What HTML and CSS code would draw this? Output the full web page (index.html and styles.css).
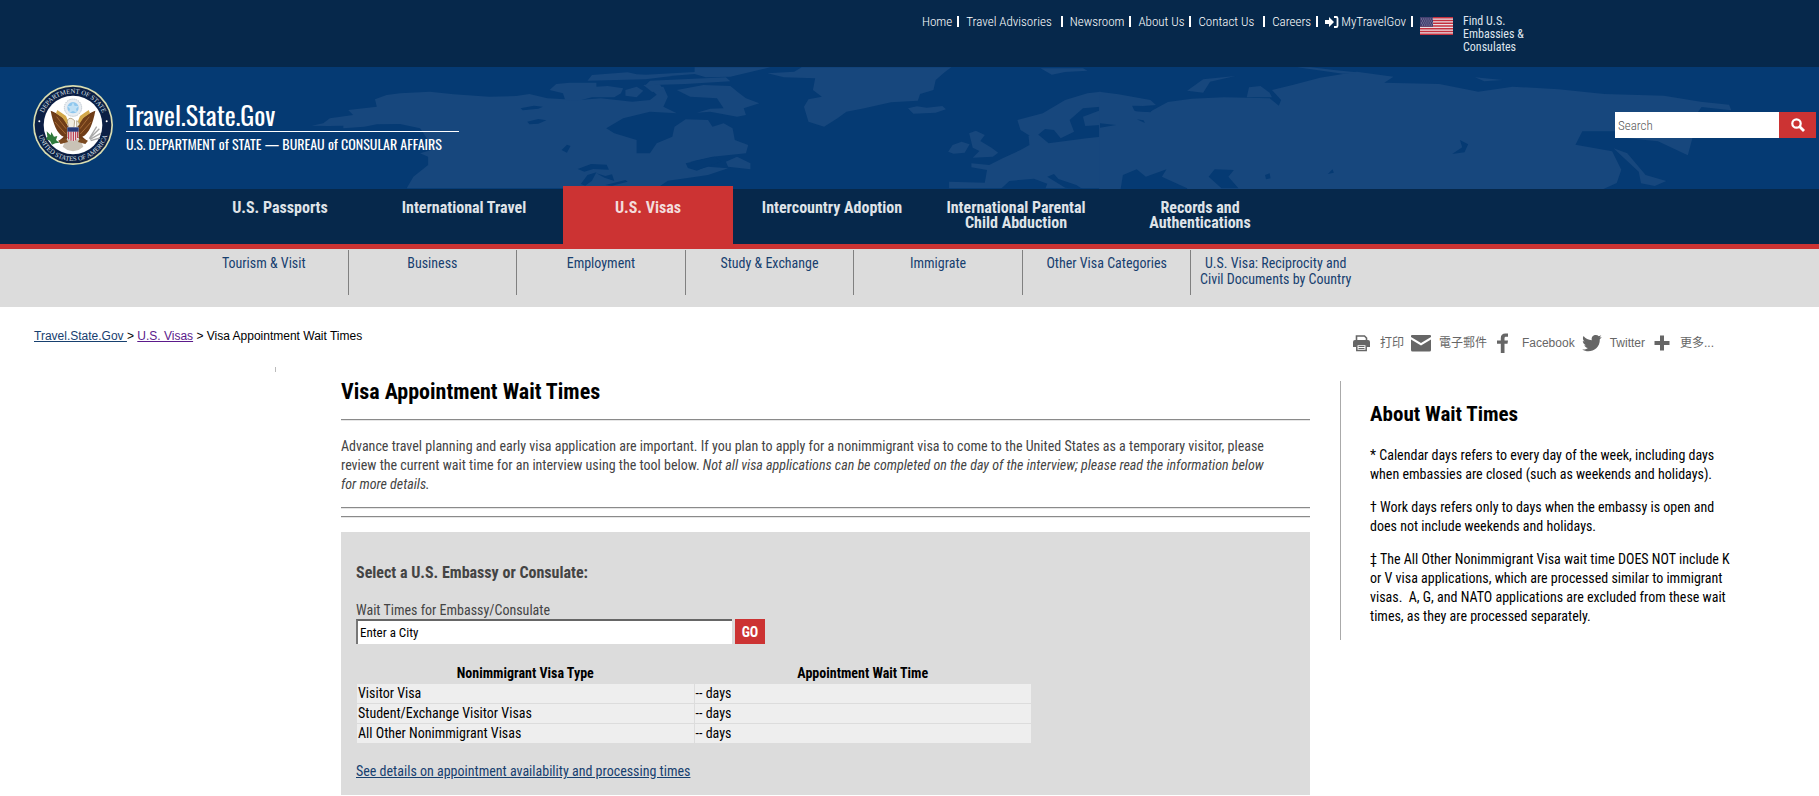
FILE: index.html
```html
<!DOCTYPE html>
<html lang="en">
<head>
<meta charset="utf-8">
<title>Visa Appointment Wait Times</title>
<link rel="stylesheet" href="styles.css">
</head>
<body>
<div class="topbar">
  <nav class="toplinks" aria-label="Utility">
    <a href="#">Home</a><i class="bar"></i>
    <a href="#">Travel Advisories</a><i class="bar wide"></i>
    <a href="#">Newsroom</a><i class="bar"></i>
    <a href="#">About Us</a><i class="bar"></i>
    <a href="#">Contact Us</a><i class="bar wide"></i>
    <a href="#">Careers</a><i class="bar"></i>
    <a href="#" class="login"><svg width="14" height="12" viewBox="0 0 14 12"><path d="M0 4h4V1l5 5-5 5V8H0z" fill="#fff"/><path d="M9 1h2.2A1.3 1.3 0 0 1 12.500 2.300v7.400A1.300 1.300 0 0 1 11.200 11H9" fill="none" stroke="#fff" stroke-width="1.800"/></svg>MyTravelGov</a><i class="bar"></i>
  </nav>
  <svg class="flag" width="33" height="18" viewBox="0 0 33 18"><path fill="#e9dfe4" d="M0 0h33v18H0z"/><path d="M0 .7h33M0 3.500h33M0 6.200h33M0 9h33M0 11.800h33M0 14.500h33M0 17.300h33" stroke="#c4303e" stroke-width="1.500"/><path fill="#43406f" d="M0 0h13v9.700H0z"/><path d="M1 2h12M2 4h11M1 6h12M2 8h11" stroke="#a9a6c4" stroke-width=".8" stroke-dasharray="1 1.200"/></svg>
  <a href="#" class="find">Find U.S. Embassies &amp; Consulates</a>
</div>

<header class="banner">
  <svg class="map" viewBox="0 0 1819 122" preserveAspectRatio="xMinYMin slice" aria-hidden="true">
    <g transform="translate(400 -7) scale(.4464 .3333)" fill="#17477d">
      <path d="M-198 197L-172 190-157 175-105 165-116 150-52 140-56 118-30 105 0 100 67 95 120 103 200 110 260 108 290 102 330 115 400 120 450 115 520 125 560 120 575 104 560 85 590 80 600 110 590 140 620 160 560 155 500 175 462 205 480 220 530 240 530 280 560 280 575 250 610 230 615 200 640 178 690 180 700 200 725 190 745 205 750 240 780 255 775 280 700 290 650 305 680 305 665 330 690 320 735 325 690 345 640 355 600 362 575 385 15 385 30 350 63 315 63 290 45 280 70 270 60 235 45 205 0 192-52 193-80 200-127 205-127 197-160 198z"/>
      <path d="M335 90L350 72 380 68 440 68 440 80 465 78 500 85 495 100 480 112 430 112 400 122 370 120 365 100zM505 90l25-10 15 12-15 20-25-5zM545 75l35-5 10 18-25 8zM620 90l60-15 60 3 20 22 15 15 30 15-35 15 5 20-20 5-60-15-30 3 30-12 30-1-15-30-60-5z"/>
      <path d="M660 22h170l-90 28-55 2-25-10-90 10-20-8 110-8zM430 45l80-8 20 6 80 5-60 10-130 4zM560 62l170-10 10 12-100 8-90 4zM730 305l25-15 30 20v18l-50-8z"/>
      <path d="M823 40l60-5 17-13h335l-15 15-20 23-5 30-30 12-5 20-60 5-60 18-40 10-20 20-30 25-35-15-10-45 10-22 30-8-20-20 5-35-70-3zM1138 145l20-6 22 4 35-5 8 10-23 10-50 3zM1435 25h95l10 7-50 4-30 8z"/>
      <path d="M1275 220l15-8 20 13-10 18 25 20 15 15-12 12-45 3 15-20-15-10zM1228 275l10-20 20-10 18 8-11 25-25 3z"/>
      <path d="M1383 180l57-20 50-40 50-20 30-5v45l-40 5-30 35 10 35-30 20-15-25-20-3-25 28-30-25zM1570 150l-40 20 5 28 35-3zM1230 385v-20l80 3 5-38-35-8v-12l40 5 30-20 40-25 20-15-2-28 20-5 25 28 85-15 32-5v155z"/>
      <g fill="#053a73"><path d="M398 327l30-15 35 2 5 15-35-2-20 8zM405 372l15-27 20-8-10 25-15 15zM440 340l20 8 15-5 5 20-22-10zM460 375l45-15 5 5-35 12zM270 145l30-8 20 3-10 6-35 5zM285 185l25-8 18 4-18 10-20 2zM362 270l12-16 8 4-8 20z"/><path d="M1345 388l20-25 55-7 30 15-5 17zM1450 350l15-8 10 15 40 18 15 13-40-5zM640 310l65-20 15 15-35 15-20 12-20-8z"/></g>
    </g>
    <g transform="translate(1100 -7) scale(.4585 .3333)" fill="#17477d">
      <path d="M-2 95l42 8 70 17 12 15-50 5 6 14 30 2 40-30 52-10 70-4 100 3 20 22 5-17-20-30 45-15 60-22 80-18 80 15-20 18 120 4 85 23 75-15 100 8 100 14 130 5 80 18 62 9 5 17-65-10-20 38 5 30-15 77-65-42-70-10-20-20h-75l-15 40 80 20 20 55-10 40-40 25H-2z"/>
      <path d="M190 92l35-34 70-10-55 17-15 33zM1120 265l30 15 40 65 45 18-25 15-30-8-5-35zM320 112l5-30 25-4 20 20 5 14zM430 22h30l50 8 60 8-40 3zM818 52l60 8-40 4z"/>
      <path fill="#053a73" d="M0 190l35 5-35 8zM45 387l5-42 30-17 20 22 45-22-10 22 55 35v4zM237 350l13-22 42 2-12 20 22 35h-37zM768 282l22-20-5-22 18 13-8 24zM70 137l50 2-10 18-35-5zM360 345l10-5 2 15-10 3zM497 342l10-14 3 10zM80 178l15 3 3 8z"/>
    </g>
  </svg>
  <a class="brand" href="#">
    <svg class="seal" width="80" height="80" viewBox="9 9 240 240" role="img" aria-label="Department of State seal">
      <defs><path id="top" d="M34 129a95 95 0 0 1 190 0"/><path id="bot" d="M21 129a108 108 0 0 0 216 0"/></defs>
      <circle cx="129" cy="129" r="120" fill="#d9dcb0"/><circle cx="129" cy="129" r="115" fill="#0b1f45"/><circle cx="129" cy="129" r="88" fill="#fff"/>
      <text class="ring"><textPath href="#top" startOffset="50%" text-anchor="middle">DEPARTMENT OF STATE</textPath></text>
      <text class="ring"><textPath href="#bot" startOffset="50%" text-anchor="middle">UNITED STATES OF AMERICA</textPath></text>
      <circle cx="28" cy="118" r="3" fill="#fff"/><circle cx="230" cy="118" r="3" fill="#fff"/>
      <circle cx="129" cy="77" r="26" fill="#e8edf2" stroke="#aab6c0" stroke-width="3" stroke-dasharray="3 3"/><circle cx="129" cy="77" r="17" fill="#8fc7ee"/><path d="M129 61l5 11h12l-8 9 4 12-13-6-13 6 4-12-8-9h12z" fill="#bfe0f5"/>
      <path d="M62 86c15 6 35 16 45 30l8 20-2 32-14 16-12-8 14-12c-20-8-32-40-39-78zM196 86c-15 6-35 16-45 30l-8 20 2 32 14 16 12-8-14-12c20-8 32-40 39-78z" fill="#6f3d18"/>
      <path d="M80 104l28 36M75 120l32 36M178 104l-28 36M183 120l-32 36" stroke="#a56a35" stroke-width="3"/>
      <path d="M82 84l26 18 8 20-6 4-12-18-20-14zM176 84l-26 18-8 20 6 4 12-18 20-14z" fill="#d3a84a"/>
      <path d="M112 118q2-12 14-8l8 6-2 20-16 2zM140 116q8 2 8 12l-8 8z" fill="#f1ece0" stroke="#9b8762" stroke-width="2"/>
      <path d="M108 172l42 0 10 22-14 10-17 4-17-4-14-10z" fill="#c9c2b6"/><path d="M84 176l24-8 6 12-22 6zM174 176l-24-8-6 12 22 6z" fill="#7b4a20"/>
      <path d="M112 136h34v28q-4 10-17 14-13-4-17-14z" fill="#e7dfe2"/><path d="M116 148v24M123 148v28M130 148v29M137 148v27M143 148v20" stroke="#b7263a" stroke-width="3"/><path d="M112 136h34v13h-34z" fill="#283b7a"/>
      <path d="M50 148l12 12 2-10 8 14 10-2-4 12 10 8-12 2-10 4-6-12-12-4 4-8z" fill="#2f7a3c"/>
      <path d="M178 170l30-30M178 170l22-36M180 172l32-18M182 176l28-8" stroke="#a9a9a9" stroke-width="4"/>
    </svg>
    <span class="names"><span class="site">Travel.State.Gov</span><span class="dept">U.S. DEPARTMENT of STATE — BUREAU of CONSULAR AFFAIRS</span></span>
  </a>
  <form class="search">
    <input type="text" aria-label="Search" placeholder="Search">
    <button type="button" aria-label="Submit search"><svg width="14" height="14" viewBox="0 0 14 14"><circle cx="5.500" cy="5.500" r="4.200" fill="none" stroke="#fff" stroke-width="2.200"/><path d="M8.500 8.500l4.500 4.500" stroke="#fff" stroke-width="2.800"/></svg></button>
  </form>
</header>

<nav class="mainnav" aria-label="Main">
  <a href="#">U.S. Passports</a><a href="#">International Travel</a><a href="#" class="active">U.S. Visas</a><a href="#">Intercountry Adoption</a><a href="#">International Parental Child Abduction</a><a href="#">Records and Authentications</a>
</nav>
<nav class="subnav" aria-label="U.S. Visas">
  <a href="#">Tourism &amp; Visit</a><a href="#">Business</a><a href="#">Employment</a><a href="#">Study &amp; Exchange</a><a href="#">Immigrate</a><a href="#">Other Visa Categories</a><a href="#">U.S. Visa: Reciprocity and Civil Documents by Country</a>
</nav>

<div class="crumbrow">
  <div class="crumbs"><a href="#">Travel.State.Gov </a>&gt; <a href="#" class="seen">U.S. Visas</a> &gt; Visa Appointment Wait Times</div>
  <div class="share">
    <a href="#"><svg width="20" height="20" viewBox="0 0 20 20"><path d="M4.500 7V3h8l2 2v2" fill="none" stroke="#666" stroke-width="1.600"/><path d="M3 7h13q2 0 2 2v5h-3.500v-2.500h-10V14H1V9q0-2 2-2z" fill="#666"/><path d="M4.800 11.500h9.400v6H4.800z" fill="#fff" stroke="#666" stroke-width="1.500"/><path d="M6.500 13.500h6M6.500 15.500h6" stroke="#666"/></svg>打印</a>
    <a href="#"><svg width="20" height="20" viewBox="0 0 20 20"><path d="M1 2h18q1 0 1 1v1l-10 6L0 4V3q0-1 1-1zM0 6.500l10 6 10-6V17q0 1.500-1.500 1.500h-17Q0 18.500 0 17z" fill="#666"/></svg>電子郵件</a>
    <a href="#"><svg width="20" height="20" viewBox="0 0 20 20"><path d="M14 .5v3.200h-2c-1 0-1.500.5-1.500 1.500v2.300H14l-.5 3.200h-3V20H6.800v-9.300H3V7.500h3.800V5c0-3 1.700-4.500 4.500-4.500z" fill="#666"/></svg>Facebook</a>
    <a href="#"><svg width="20" height="20" viewBox="0 0 20 20"><path d="M19.800 4.300l-2 2c.3 8-5.800 12-11.300 12-2.300 0-4.500-.6-6.300-1.800 2.100.2 4-.3 5.700-1.600-1.700-.1-3-1.200-3.600-2.700h1.700C2 11.600.8 9.900.8 8.100l1.800.5C.9 7.400.4 5 1.500 3.100c2 2.500 4.900 4 8.300 4.200C9 3.800 11.500 2 13.800 2c1.200 0 2.200.4 3 1.200l2.500-1-1.700 2.400z" fill="#666"/></svg>Twitter</a>
    <a href="#"><svg width="20" height="20" viewBox="0 0 20 20"><path d="M8 2.500h4V8h5.500v4H12v5.500H8V12H2.500V8H8z" fill="#666"/></svg>更多...</a>
  </div>
</div>

<div class="page">
  <div class="rail"></div>
  <main class="content">
    <h1>Visa Appointment Wait Times</h1>
    <hr>
    <p class="intro">Advance travel planning and early visa application are important. If you plan to apply for a nonimmigrant visa to come to the United States as a temporary visitor, please<br>review the current wait time for an interview using the tool below. <em>Not all visa applications can be completed on the day of the interview; please read the information below<br>for more details.</em></p>
    <hr>
    <hr>
    <section class="tool">
      <h2>Select a U.S. Embassy or Consulate:</h2>
      <label for="city">Wait Times for Embassy/Consulate</label>
      <div class="field"><input id="city" type="text" value="Enter a City"><button type="button">GO</button></div>
      <table>
        <thead><tr><th>Nonimmigrant Visa Type</th><th>Appointment Wait Time</th></tr></thead>
        <tbody>
          <tr><td>Visitor Visa</td><td>-- days</td></tr>
          <tr><td>Student/Exchange Visitor Visas</td><td>-- days</td></tr>
          <tr><td>All Other Nonimmigrant Visas</td><td>-- days</td></tr>
        </tbody>
      </table>
      <a class="details" href="#">See details on appointment availability and processing times</a>
    </section>
  </main>
  <aside class="about">
    <h2>About Wait Times</h2>
    <p>* Calendar days refers to every day of the week, including days<br>when embassies are closed (such as weekends and holidays).</p>
    <p>† Work days refers only to days when the embassy is open and<br>does not include weekends and holidays.</p>
    <p>‡ The All Other Nonimmigrant Visa wait time DOES NOT include K<br>or V visa applications, which are processed similar to immigrant<br>visas.&nbsp; A, G, and NATO applications are excluded from these wait<br>times, as they are processed separately.</p>
  </aside>
</div>
</body>
</html>
```
FILE: styles.css
```css
* { box-sizing: border-box; }
body { margin: 0; background: #fff; color: #000; font: 14px/19px "Roboto Condensed", Roboto, sans-serif; }
a { text-decoration: none; }
button, input { font-family: inherit; border: 0; border-radius: 0; }

.topbar { display: flex; align-items: flex-start; justify-content: flex-end; min-height: 67px; padding: 15px 290px 0 0; background: #06284b; font-size: 13px; line-height: 13px; }
.topbar a { color: #fff; font-weight: 300; }
.toplinks { display: flex; align-items: center; }
.bar { width: 2px; height: 11px; margin: 0 7px 0 5px; background: #fff; }
.bar.wide { margin-left: 9px; }
.login { display: flex; align-items: center; gap: 2px; }
.flag { margin: 2px 10px 0 0; }
.topbar .find { width: 66px; font-size: 12px; font-weight: 400; color: #dfe5ee; }

.banner { position: relative; display: flex; align-items: center; justify-content: space-between; min-height: 122px; padding: 0 3px 6px 33px; background: #053a73; }
.map { position: absolute; top: 0; left: 0; width: 100%; height: 100%; }
.brand, .search { position: relative; display: flex; align-items: center; }
.brand { gap: 13px; color: #fff; font-family: Oswald, "Roboto Condensed", sans-serif; }
.ring { font: 20px "Liberation Serif", serif; fill: #dfe3ea; }
.names { width: 333px; white-space: nowrap; }
.site, .dept { display: block; }
.site { padding-top: 5px; font-size: 26px; line-height: 32px; border-bottom: 1px solid #fff; }
.dept { font-size: 14px; line-height: 24px; }
.search input { width: 164px; height: 26px; padding: 0 3px; background: #fff; font-size: 13px; font-weight: 300; }
.search input::placeholder { color: #555; }
.search button { display: flex; align-items: center; justify-content: center; width: 37px; height: 26px; background: #c33; }

.mainnav { display: flex; gap: 14px; padding-left: 195px; background: #06284b; border-bottom: 5px solid #c33; position: relative; }
.mainnav a { width: 170px; min-height: 58px; margin-top: -3px; padding: 14px 10px 0; color: #dfe3e8; font-size: 16px; font-weight: 700; line-height: 15px; text-align: center; }
.mainnav .active { background: #c33; color: #f3dcdc; }

.subnav { display: grid; grid-template-columns: repeat(7, 1fr); min-height: 58px; padding: 1px 459px 12px 180px; background: #dcdcdc; }
.subnav a { padding: 5px 5px 0; color: #17406f; line-height: 16px; text-align: center; border-right: 1px solid #808080; }
.subnav a:last-child { border-right: 0; }

.crumbrow { display: flex; justify-content: space-between; align-items: flex-start; min-height: 60px; padding: 19px 105px 0 34px; font: 12px/20px "Liberation Sans", "Noto Sans CJK TC", sans-serif; }
.crumbs a { color: #17406f; text-decoration: underline; white-space: pre; }
.crumbs .seen { color: #5b1a8b; }
.share { display: flex; gap: 7px; padding-top: 7px; }
.share a { display: flex; align-items: center; gap: 8px; color: #666; }

.page { display: flex; align-items: flex-start; }
.rail { width: 276px; height: 5px; border-right: 1px solid #bbb; }
.content { flex: 1; margin: 13px 30px 0 65px; color: #444; }
h1, h2 { margin: 0; }
h1 { color: #000; font-size: 22px; line-height: 24px; }
hr { margin: 0 0 7px; border: 0; border-top: 1px solid #8a8a8a; border-bottom: 1px solid #e6e6e6; }
h1 + hr { margin: 15px 0 16px; }
.intro { margin: 0 0 13px; }
.tool { margin-top: 14px; padding: 31px 15px 14px; background: #dcdcdc; }
.tool h2 { margin-bottom: 18px; font-size: 16px; line-height: 20px; }
.tool label { display: block; line-height: 18px; }
.field { display: flex; gap: 3px; margin-bottom: 19px; }
.field input { width: 376px; height: 25px; padding: 0 2px; background: #fff; font-size: 13px; border-top: 2px solid #666; border-left: 2px solid #777; }
.field button { width: 30px; height: 25px; padding: 0; background: #c33; color: #fff; font-size: 14px; font-weight: 700; }
table { width: 676px; margin-bottom: 18px; border-collapse: collapse; table-layout: fixed; color: #000; }
th { padding: 0; line-height: 20px; }
td { padding: 0 1px; line-height: 19px; background: #eee; border: 1px solid #dcdcdc; }
.details { color: #17406f; text-decoration: underline; }

.about { width: 479px; margin-top: 14px; padding: 20px 60px 0 29px; border-left: 1px solid #aaa; white-space: nowrap; }
.about h2 { font-size: 21px; line-height: 26px; margin-bottom: 19px; }
.about p { margin: 0 0 14px; }
```
